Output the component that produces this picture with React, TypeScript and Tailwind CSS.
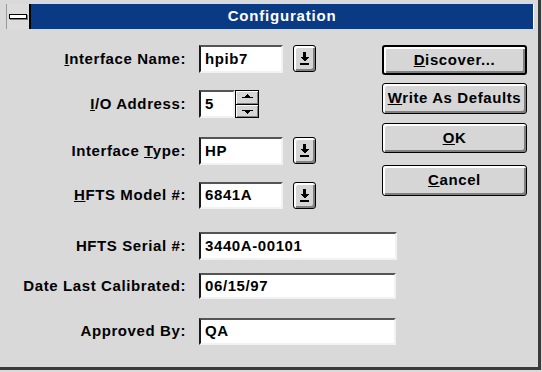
import React from "react";

const raised =
    "bg-[#d6d6d6] border border-black rounded-[3px] shadow-[inset_2px_2px_0_#ffffff,inset_-2px_-2px_0_#808080]";

const sunken =
    "bg-white border-2 border-t-[#555555] border-l-[#1a1a1a] border-r-[#f2f2f2] border-b-[#f2f2f2] flex items-center pl-[4px]";

const DropArrow = () => (
    <svg width="9" height="13" viewBox="0 0 9 13" shapeRendering="crispEdges">
        <rect x="3" y="0" width="3" height="5" fill="#000" />
        <polygon points="0,5 9,5 4.5,9.5" fill="#000" />
        <rect x="0" y="11" width="9" height="2" fill="#000" />
    </svg>
);

const DropButton = () => (
    <div className={`${raised} ml-[10px] w-[23px] h-[27px] flex items-center justify-center`}>
        <DropArrow />
    </div>
);

const SpinHalf = ({ up }: { up: boolean }) => (
    <div className="flex-1 flex items-center justify-center bg-[#d6d6d6] shadow-[inset_1px_1px_0_#ffffff,inset_-1px_-1px_0_#808080]">
        <svg width="11" height="6" viewBox="0 0 11 6" shapeRendering="crispEdges">
            {up ? (
                <>
                    <polygon points="2,3 9,3 5.5,0" fill="#000" />
                    <rect x="0" y="3" width="11" height="1" fill="#000" />
                </>
            ) : (
                <>
                    <rect x="0" y="2" width="11" height="1" fill="#000" />
                    <polygon points="2,3 9,3 5.5,6" fill="#000" />
                </>
            )}
        </svg>
    </div>
);

const Label = ({ children, h = "h-[28px]" }: { children: React.ReactNode; h?: string }) => (
    <div className={`${h} flex items-center justify-end pr-[13px] whitespace-nowrap`}>{children}</div>
);

const Btn = ({ children, def = false, cls }: { children: React.ReactNode; def?: boolean; cls: string }) => (
    <div
        className={`${raised} ${def ? "border-2" : ""} ${cls} w-[145px] flex items-center justify-center whitespace-nowrap`}
    >
        {children}
    </div>
);

export default function App() {
    return (
        <div className="w-[542px] h-[372px] bg-[#d9d9d9] overflow-hidden font-['Liberation_Sans',Arial,sans-serif] font-bold text-[15px] tracking-[0.6px] text-black">
            <div className="w-[541px] h-[370px] border-r-[3px] border-b-[3px] border-[#3a3a3a] flex flex-col">
                {/* title bar */}
                <div className="ml-[6px] mt-[4px] w-[528px] h-[25px] flex">
                    <div className="w-[25px] h-full bg-[#dcdcdc] border-l border-[#9a9a9a] border-r-2 border-r-black flex items-center justify-center">
                        <div className="w-[18px] h-[5px] bg-white border border-black shadow-[1px_1px_0_#7a7a7a]" />
                    </div>
                    <div className="flex-1 h-full bg-[#0a3a84] border-r border-white flex items-center justify-center text-white tracking-[0.8px]">
                        Configuration
                    </div>
                </div>

                {/* body */}
                <div className="mt-[16px] grid grid-cols-[199px_183px_145px] grid-rows-[45px_47px_45px_50px_41px_45px_28px]">
                    <Label>
                        <span><u>I</u>nterface Name:</span>
                    </Label>
                    <div className="flex items-start">
                        <div className={`${sunken} w-[84px] h-[28px]`}>hpib7</div>
                        <DropButton />
                    </div>

                    <div className="col-start-3 row-start-1 row-span-4 flex flex-col">
                        <Btn def cls="h-[30px]">
                            <span><u>D</u>iscover...</span>
                        </Btn>
                        <Btn cls="h-[31px] mt-[8px]">
                            <span><u>W</u>rite As Defaults</span>
                        </Btn>
                        <Btn cls="h-[30px] mt-[9px]">
                            <span><u>O</u>K</span>
                        </Btn>
                        <Btn cls="h-[31px] mt-[12px]">
                            <span><u>C</u>ancel</span>
                        </Btn>
                    </div>

                    <Label>
                        <span><u>I</u>/O Address:</span>
                    </Label>
                    <div className="flex items-start">
                        <div className={`${sunken} w-[36px] h-[28px]`}>5</div>
                        <div className="w-[24px] h-[28px] border border-black flex flex-col gap-px bg-black">
                            <SpinHalf up />
                            <SpinHalf up={false} />
                        </div>
                    </div>

                    <Label>
                        <span>Interface <u>T</u>ype:</span>
                    </Label>
                    <div className="flex items-start">
                        <div className={`${sunken} w-[84px] h-[28px]`}>HP</div>
                        <DropButton />
                    </div>

                    <Label h="h-[27px]">
                        <span><u>H</u>FTS Model #:</span>
                    </Label>
                    <div className="flex items-start">
                        <div className={`${sunken} w-[84px] h-[27px]`}>6841A</div>
                        <DropButton />
                    </div>

                    <Label>HFTS Serial #:</Label>
                    <div className="col-span-2">
                        <div className={`${sunken} w-[198px] h-[28px]`}>3440A-00101</div>
                    </div>

                    <Label h="h-[26px]">Date Last Calibrated:</Label>
                    <div className="col-span-2">
                        <div className={`${sunken} w-[197px] h-[26px]`}>06/15/97</div>
                    </div>

                    <Label h="h-[27px]">Approved By:</Label>
                    <div className="col-span-2">
                        <div className={`${sunken} w-[197px] h-[27px]`}>QA</div>
                    </div>
                </div>
            </div>
        </div>
    );
}
